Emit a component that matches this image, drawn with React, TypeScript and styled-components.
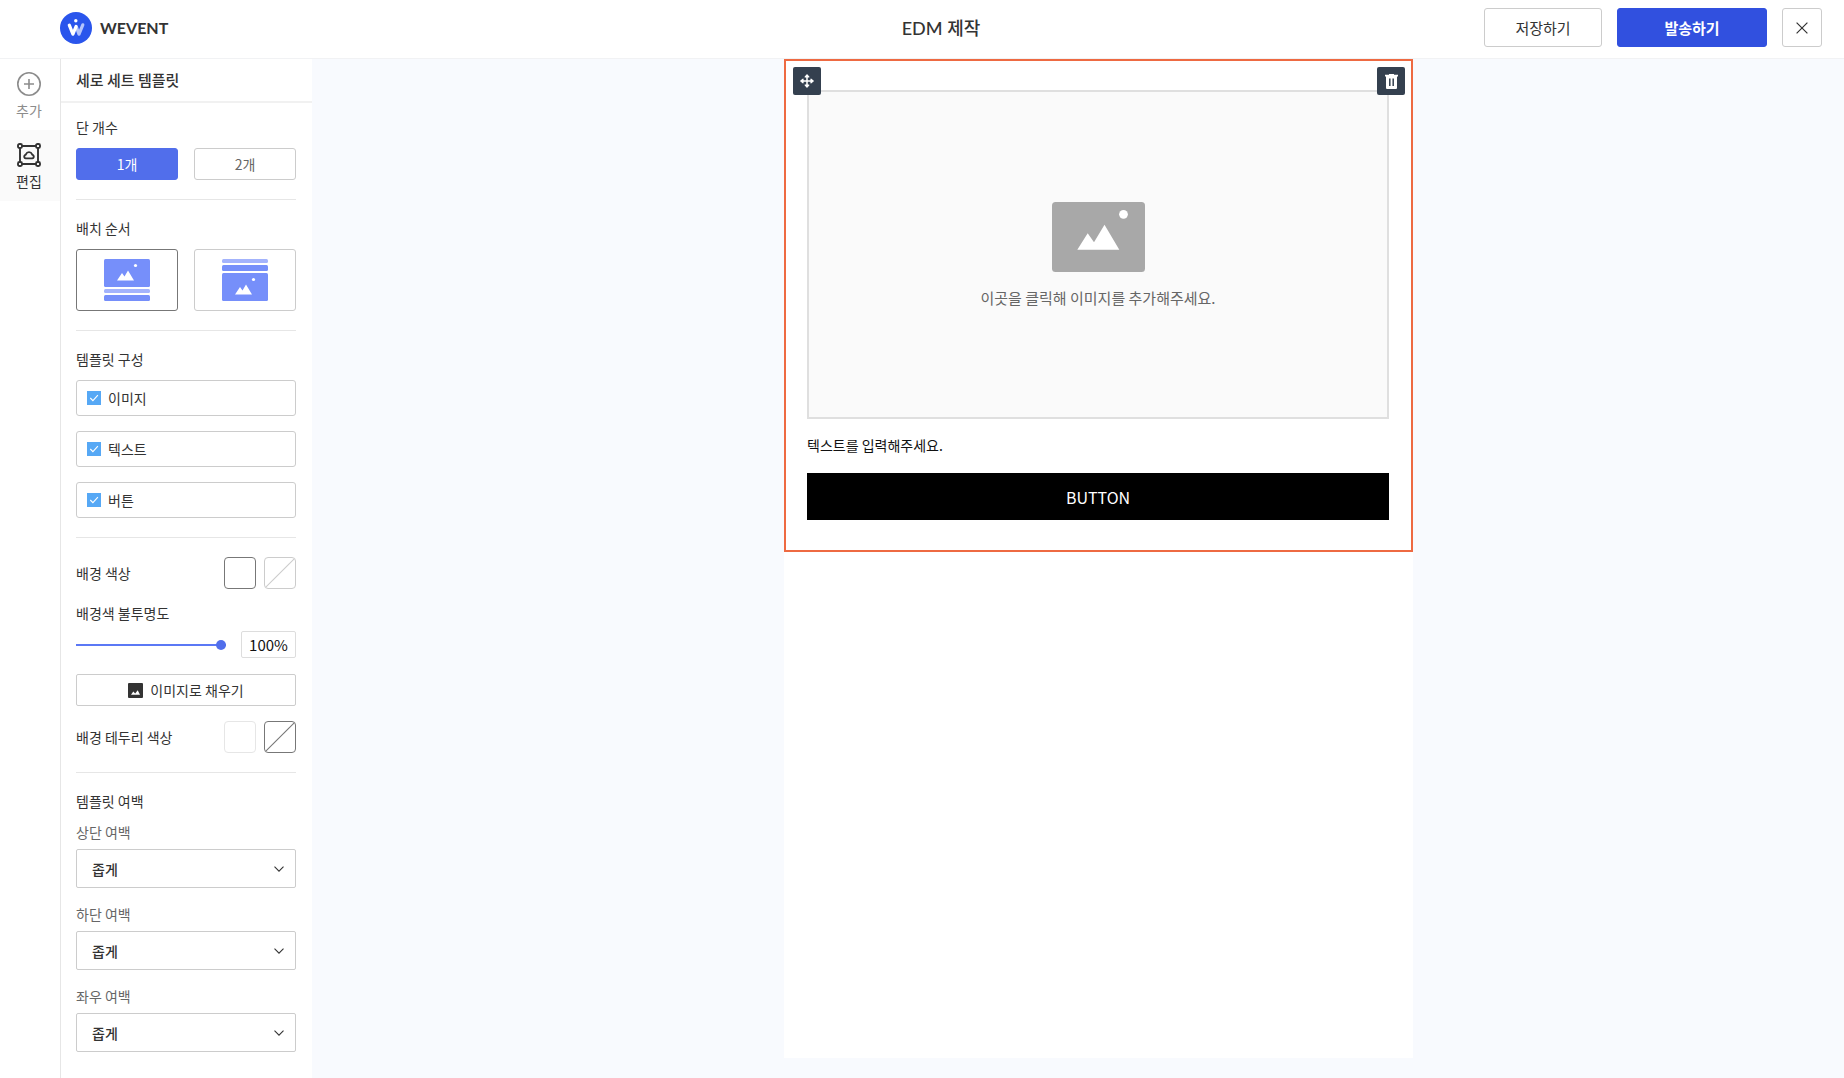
import React, { useState } from "react";
import styled, { createGlobalStyle, css } from "styled-components";

const GlobalStyle = createGlobalStyle`
  *, *::before, *::after { box-sizing: border-box; }
  body {
    margin: 0;
    background: #f8fafe;
    color: #333;
    font-family: "Noto Sans CJK KR", "Noto Sans", sans-serif;
    font-size: 14px;
    line-height: 20px;
  }
  button, input, select { font: inherit; color: inherit; margin: 0; }
  button { cursor: pointer; padding: 0; }
  h1, h2, h3, p { margin: 0; font-size: inherit; font-weight: inherit; }
  svg { display: block; }
`;

const Page = styled.div`
  display: flex;
  flex-direction: column;
  min-height: 100vh;
`;

const Header = styled.header`
  display: grid;
  grid-template-columns: 1fr auto 1fr;
  align-items: center;
  height: 59px;
  padding: 0 22px 3px 60px;
  background: #fff;
  border-bottom: 1px solid #f1f2f4;
`;

const Brand = styled.a`
  display: flex;
  align-items: center;
  gap: 8px;
  color: #333;
  text-decoration: none;
  font-family: Lato, sans-serif;
  font-size: 16px;
  font-weight: 700;
`;

const PageTitle = styled.h1`
  font-family: Lato, "Noto Sans CJK KR", sans-serif;
  font-size: 18px;
  font-weight: 500;
  line-height: 24px;
`;

const HeaderActions = styled.div`
  display: flex;
  justify-content: flex-end;
  gap: 15px;
`;

const HeaderButton = styled.button<{ $width: number; $primary?: boolean }>`
  display: flex;
  align-items: center;
  justify-content: center;
  width: ${(p) => p.$width}px;
  height: 39px;
  border: 1px solid ${(p) => (p.$primary ? "#3150df" : "#ccc")};
  border-radius: 3px;
  background: ${(p) => (p.$primary ? "#3150df" : "#fff")};
  color: ${(p) => (p.$primary ? "#fff" : "#333")};
  font-size: 15px;
  font-weight: ${(p) => (p.$primary ? 700 : 400)};
`;

const Body = styled.div`
  display: flex;
  flex: 1;
`;

const Rail = styled.nav`
  flex: none;
  width: 61px;
  background: #fff;
  border-right: 1px solid #e6e6e6;
`;

const RailItem = styled.button<{ $active?: boolean }>`
  display: flex;
  flex-direction: column;
  align-items: center;
  justify-content: center;
  gap: 4px;
  width: 100%;
  height: 71px;
  padding: 3px 2px 0 0;
  border: 0;
  background: ${(p) => (p.$active ? "#fafafa" : "#fff")};
  color: ${(p) => (p.$active ? "#333" : "#8c8c8c")};
`;

const Panel = styled.aside`
  flex: none;
  width: 251px;
  background: #fff;
`;

const PanelTitle = styled.h2`
  height: 44px;
  padding: 0 15px;
  border-bottom: 2px solid #f1f1f1;
  font-size: 15px;
  font-weight: 500;
  line-height: 42px;
`;

const Section = styled.section`
  margin: 0 16px 0 15px;
  padding: 15px 0 19px;
  & + & { padding-top: 19px; border-top: 1px solid #e6e6e6; }
`;

const SectionTitle = styled.h3`
  margin-bottom: 12px;
  line-height: 18px;
`;

const Pair = styled.div`
  display: grid;
  grid-template-columns: 1fr 1fr;
  gap: 16px;
`;

const ChoiceButton = styled.button<{ $selected?: boolean }>`
  height: 32px;
  border: 1px solid ${(p) => (p.$selected ? "#516eeb" : "#ccc")};
  border-radius: 3px;
  background: ${(p) => (p.$selected ? "#516eeb" : "#fff")};
  color: ${(p) => (p.$selected ? "#fff" : "#666")};
`;

const LayoutButton = styled.button<{ $selected?: boolean }>`
  display: flex;
  align-items: center;
  justify-content: center;
  height: 62px;
  border: 1px solid ${(p) => (p.$selected ? "#777" : "#ccc")};
  border-radius: 3px;
  background: #fff;
`;

const CheckList = styled.div`
  display: grid;
  gap: 15px;
`;

const CheckRow = styled.label`
  display: flex;
  align-items: center;
  gap: 7px;
  height: 36px;
  padding: 0 10px;
  border: 1px solid #ccc;
  border-radius: 3px;
`;

const CheckMark = styled.span`
  display: grid;
  width: 14px;
  height: 14px;
  > * { grid-area: 1 / 1; }
  svg { pointer-events: none; }
`;

const CheckInput = styled.input`
  appearance: none;
  width: 14px;
  height: 14px;
  border: 1px solid #ccc;
  background: #fff;
  &:checked { border-color: #56a8f5; background: #56a8f5; }
`;

const SwatchRow = styled.div`
  display: flex;
  align-items: center;
  gap: 8px;
  height: 32px;
`;

const SwatchLabel = styled.span`
  flex: 1;
`;

const Swatch = styled.button<{ $tone: string }>`
  width: 32px;
  height: 32px;
  border: 1px solid ${(p) => p.$tone};
  border-radius: 4px;
  background: #fff;
  color: ${(p) => p.$tone};
`;

const OpacityLabel = styled.label`
  display: block;
  margin: 14px 0 8px;
`;

const OpacityRow = styled.div`
  display: flex;
  align-items: center;
  gap: 15px;
  margin-bottom: 16px;
`;

const Slider = styled.input`
  appearance: none;
  flex: 1;
  min-width: 0;
  height: 10px;
  background: linear-gradient(#5b78f5, #5b78f5) center / 100% 2px no-repeat;
  &::-webkit-slider-thumb {
    appearance: none;
    width: 10px;
    height: 10px;
    border: 0;
    border-radius: 5px;
    background: #516eeb;
  }
`;

const OpacityValue = styled.input`
  width: 55px;
  height: 27px;
  padding: 0;
  border: 1px solid #ddd;
  border-radius: 2px;
  background: #fff;
  color: #111;
  font-size: 15px;
  text-align: center;
`;

const FillButton = styled.button`
  display: flex;
  align-items: center;
  justify-content: center;
  gap: 7px;
  width: 100%;
  height: 32px;
  margin-bottom: 15px;
  border: 1px solid #ccc;
  border-radius: 2px;
  background: #fff;
`;

const Field = styled.div`
  & + & { margin-top: 16px; }
`;

const FieldLabel = styled.label`
  display: block;
  margin-bottom: 7px;
  color: #666;
`;

const SelectBox = styled.div`
  display: grid;
  align-items: center;
  > * { grid-area: 1 / 1; }
  svg { justify-self: end; margin-right: 12px; pointer-events: none; }
`;

const Select = styled.select`
  appearance: none;
  width: 100%;
  height: 39px;
  padding: 0 15px;
  border: 1px solid #ccc;
  border-radius: 2px;
  background: #fff;
  font-weight: 500;
`;

const Workspace = styled.main`
  display: flex;
  flex: 1;
  justify-content: center;
  padding: 0 0 20px 41px;
`;

const Paper = styled.div`
  width: 629px;
  background: #fff;
`;

const Block = styled.section`
  position: relative;
  padding: 29px 22px 30px 21px;
  border: 2px solid #ee6a42;
`;

const ToolButton = styled.button<{ $side: "left" | "right" }>`
  position: absolute;
  top: 6px;
  ${(p) => (p.$side === "left" ? css`left: 7px;` : css`right: 6px;`)}
  display: flex;
  align-items: center;
  justify-content: center;
  width: 28px;
  height: 28px;
  border: 0;
  border-radius: 2px;
  background: #34404f;
  color: #fff;
`;

const ImageDrop = styled.button`
  display: flex;
  flex-direction: column;
  align-items: center;
  justify-content: center;
  gap: 16px;
  width: 100%;
  height: 329px;
  border: 2px solid #dfdfdf;
  background: #fafafa;
  color: #666;
  font-size: 15px;
`;

const Copy = styled.p`
  padding: 16px 0 18px;
  color: #111;
`;

const BlockButton = styled.button`
  display: block;
  width: 100%;
  height: 47px;
  border: 0;
  background: #000;
  color: #fff;
  font-size: 16px;
`;

const Logo = () => (
  <svg width="32" height="32" viewBox="0 0 32 32" aria-hidden="true">
    <circle cx="16" cy="16" r="16" fill="#2a55ec" />
    <path d="M19 22.2 22.8 12.8M16.6 15.6 19 22.2" stroke="#b4c4fb" strokeWidth="3.2" strokeLinecap="round" />
    <path d="M9.3 13.2 12.9 22.2 16.1 14.4" fill="none" stroke="#fff" strokeWidth="3.2" strokeLinecap="round" strokeLinejoin="round" />
    <circle cx="15.8" cy="8.8" r="1.7" fill="#fff" />
  </svg>
);

const CloseIcon = () => (
  <svg width="12" height="12" viewBox="0 0 12 12" stroke="#333" strokeWidth="1.2" aria-hidden="true">
    <path d="M.6.6 11.4 11.4M11.4.6.6 11.4" />
  </svg>
);

const AddIcon = () => (
  <svg width="24" height="24" viewBox="0 0 24 24" fill="none" stroke="currentColor" strokeWidth="1.6" aria-hidden="true">
    <circle cx="12" cy="12" r="11.2" />
    <path d="M12 7v10M7 12h10" />
  </svg>
);

const EditIcon = () => (
  <svg width="24" height="24" viewBox="0 0 24 24" fill="none" stroke="currentColor" strokeWidth="1.9" aria-hidden="true">
    <path d="M5 3h14M5 21h14M3 5v14M21 5v14" />
    <rect x="1" y="1" width="4" height="4" rx="1.5" />
    <rect x="19" y="1" width="4" height="4" rx="1.5" />
    <rect x="1" y="19" width="4" height="4" rx="1.5" />
    <rect x="19" y="19" width="4" height="4" rx="1.5" />
    <path d="M8.7 15.4a1.8 1.8 0 0 1-.8-3.2c.5-.2.9-.5 1.1-1 1-2.8 5-2.8 6 0 .2.5.6.8 1.1 1a1.8 1.8 0 0 1-.8 3.2z" />
  </svg>
);

const LayoutIcon = ({ imageFirst }: { imageFirst: boolean }) => (
  <svg width="46" height="42" viewBox="0 0 46 42" aria-hidden="true">
    <g transform={imageFirst ? undefined : "translate(0 14)"}>
      <rect width="46" height="28" rx="1.5" fill="#768ffa" />
      <path d="M13 21.5 18 14l2.5 3.5L24 11.5l6 10z" fill="#fff" />
      <circle cx="31.5" cy="6.5" r="1.6" fill="#fff" />
    </g>
    <rect y={imageFirst ? 30 : 0} width="46" height="4" rx="1.5" fill="#a3b3fc" />
    <rect y={imageFirst ? 36 : 6} width="46" height="6" rx="1.5" fill="#768ffa" />
  </svg>
);

const TickIcon = () => (
  <svg width="14" height="14" viewBox="0 0 14 14" fill="none" stroke="#fff" strokeWidth="1.1" aria-hidden="true">
    <path d="m3.3 7 2.6 2.6 5-5.4" />
  </svg>
);

const SlashIcon = () => (
  <svg width="30" height="30" viewBox="0 0 30 30" stroke="currentColor" strokeWidth="1.1" aria-hidden="true">
    <path d="M.8 29.2 29.2.8" />
  </svg>
);

const PictureIcon = () => (
  <svg width="15" height="15" viewBox="0 0 15 15" aria-hidden="true">
    <rect width="15" height="15" rx="1" fill="#333" />
    <path d="M3 11.7 5.3 8.4 7.2 10.6 9.7 7.3 12 11.7z" fill="#fff" />
  </svg>
);

const ChevronIcon = () => (
  <svg width="10" height="6" viewBox="0 0 10 6" fill="none" stroke="#333" strokeWidth="1.1" aria-hidden="true">
    <path d="M.5.6 5 5.1 9.5.6" />
  </svg>
);

const MoveIcon = () => (
  <svg width="14" height="14" viewBox="0 0 14 14" fill="#fff" aria-hidden="true">
    <path d="M2 7h10M7 2v10" stroke="#fff" strokeWidth="1.5" />
    <path
      d="M7 .8 8.8 3H5.2zM7 13.2 5.2 11h3.6zM.8 7 3 5.2v3.6zM13.2 7 11 8.8V5.2z"
      stroke="#fff"
      strokeWidth="1.2"
      strokeLinejoin="round"
    />
  </svg>
);

const TrashIcon = () => (
  <svg width="13" height="15" viewBox="0 0 13 15" aria-hidden="true">
    <path d="M4 0h5v.8h4v1.8h-1V14a1 1 0 0 1-1 1H2a1 1 0 0 1-1-1V2.600H0V.8h4z" fill="#fff" />
    <path d="M4.800 4.500v7.500M8.200 4.500v7.500" stroke="#34404f" strokeWidth="1.500" />
  </svg>
);

const PlaceholderIcon = () => (
  <svg width="93" height="70" viewBox="0 0 93 70" aria-hidden="true">
    <rect width="93" height="70" rx="3.5" fill="#a8a8a8" />
    <path d="M25.3 47.7 35.7 31.3 42 40.3 52.5 22.8 67.3 47.7z" fill="#fff" />
    <circle cx="71.5" cy="12.3" r="4.4" fill="#fff" />
  </svg>
);

const PARTS = ["이미지", "텍스트", "버튼"];
const MARGINS = ["상단 여백", "하단 여백", "좌우 여백"];

export default function App() {
  const [columns, setColumns] = useState(1);
  const [imageFirst, setImageFirst] = useState(true);
  const [opacity, setOpacity] = useState(100);

  return (
    <Page>
      <GlobalStyle />
      <Header>
        <Brand href="#"><Logo />WEVENT</Brand>
        <PageTitle>EDM 제작</PageTitle>
        <HeaderActions>
          <HeaderButton $width={118}>저장하기</HeaderButton>
          <HeaderButton $width={150} $primary>발송하기</HeaderButton>
          <HeaderButton $width={40} aria-label="닫기"><CloseIcon /></HeaderButton>
        </HeaderActions>
      </Header>
      <Body>
        <Rail>
          <RailItem><AddIcon />추가</RailItem>
          <RailItem $active><EditIcon />편집</RailItem>
        </Rail>
        <Panel>
          <PanelTitle>세로 세트 템플릿</PanelTitle>
          <Section>
            <SectionTitle>단 개수</SectionTitle>
            <Pair>
              {[1, 2].map((n) => (
                <ChoiceButton key={n} $selected={columns === n} onClick={() => setColumns(n)}>{`${n}개`}</ChoiceButton>
              ))}
            </Pair>
          </Section>
          <Section>
            <SectionTitle>배치 순서</SectionTitle>
            <Pair>
              {[true, false].map((first) => (
                <LayoutButton
                  key={String(first)}
                  $selected={imageFirst === first}
                  aria-label={first ? "이미지 먼저" : "텍스트 먼저"}
                  onClick={() => setImageFirst(first)}
                >
                  <LayoutIcon imageFirst={first} />
                </LayoutButton>
              ))}
            </Pair>
          </Section>
          <Section>
            <SectionTitle>템플릿 구성</SectionTitle>
            <CheckList>
              {PARTS.map((part) => (
                <CheckRow key={part}>
                  <CheckMark>
                    <CheckInput type="checkbox" defaultChecked />
                    <TickIcon />
                  </CheckMark>
                  {part}
                </CheckRow>
              ))}
            </CheckList>
          </Section>
          <Section>
            <SwatchRow>
              <SwatchLabel>배경 색상</SwatchLabel>
              <Swatch $tone="#777" aria-label="배경 흰색" />
              <Swatch $tone="#ccc" aria-label="배경 없음"><SlashIcon /></Swatch>
            </SwatchRow>
            <OpacityLabel htmlFor="opacity">배경색 불투명도</OpacityLabel>
            <OpacityRow>
              <Slider id="opacity" type="range" min={0} max={100} value={opacity} onChange={(e) => setOpacity(Number(e.target.value))} />
              <OpacityValue aria-label="불투명도 값" value={`${opacity}%`} readOnly />
            </OpacityRow>
            <FillButton><PictureIcon />이미지로 채우기</FillButton>
            <SwatchRow>
              <SwatchLabel>배경 테두리 색상</SwatchLabel>
              <Swatch $tone="#e6e6e6" aria-label="테두리 흰색" />
              <Swatch $tone="#777" aria-label="테두리 없음"><SlashIcon /></Swatch>
            </SwatchRow>
          </Section>
          <Section>
            <SectionTitle>템플릿 여백</SectionTitle>
            {MARGINS.map((name, i) => (
              <Field key={name}>
                <FieldLabel htmlFor={`margin-${i}`}>{name}</FieldLabel>
                <SelectBox>
                  <Select id={`margin-${i}`} defaultValue="좁게">
                    <option>좁게</option>
                    <option>보통</option>
                    <option>넓게</option>
                  </Select>
                  <ChevronIcon />
                </SelectBox>
              </Field>
            ))}
          </Section>
        </Panel>
        <Workspace>
          <Paper>
            <Block>
              <ImageDrop>
                <PlaceholderIcon />
                이곳을 클릭해 이미지를 추가해주세요.
              </ImageDrop>
              <Copy>텍스트를 입력해주세요.</Copy>
              <BlockButton>BUTTON</BlockButton>
              <ToolButton $side="left" aria-label="이동"><MoveIcon /></ToolButton>
              <ToolButton $side="right" aria-label="삭제"><TrashIcon /></ToolButton>
            </Block>
          </Paper>
        </Workspace>
      </Body>
    </Page>
  );
}
